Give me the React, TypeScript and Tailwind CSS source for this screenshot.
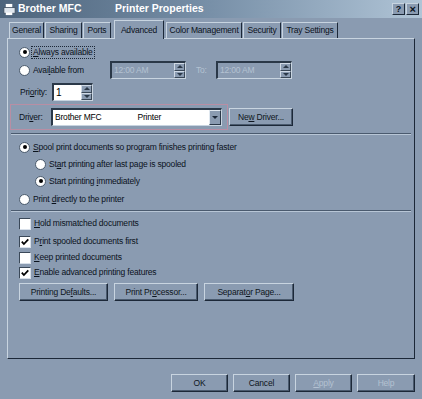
import React from "react";

const font = { fontFamily: "'Liberation Sans', Arial, sans-serif" };

function Radio({ checked }: { checked?: boolean }) {
  return (
    <span className="relative inline-block w-[11px] h-[11px] rounded-full bg-white border border-[#4a5a6c] shrink-0">
      {checked && <span className="absolute left-[2.5px] top-[2.5px] w-[4px] h-[4px] rounded-full bg-black" />}
    </span>
  );
}

function Check({ checked }: { checked?: boolean }) {
  return (
    <span className="relative inline-block w-[12px] h-[12px] bg-white border-t border-l border-[#3a4858] border-b border-r border-b-[#d8e0ea] border-r-[#d8e0ea] shrink-0">
      {checked && (
        <svg viewBox="0 0 10 10" className="absolute left-0 top-0 w-[10px] h-[10px]">
          <path d="M1.8 4.6 L3.9 7 L8.3 2.4" stroke="#000" strokeWidth="1.8" fill="none" />
        </svg>
      )}
    </span>
  );
}

function Btn({ children, w, disabled }: { children: React.ReactNode; w: number; disabled?: boolean }) {
  return (
    <div
      className="h-[18px] shrink-0 flex items-center justify-center whitespace-nowrap border border-t-[#c8d4e0] border-l-[#c8d4e0] border-b-[#1c2838] border-r-[#1c2838] shadow-[inset_-1px_-1px_0_#4a5a6e]"
      style={{ width: w }}
    >
      <span className={disabled ? "text-[#b4c2d2]" : "text-[#0e1620]"}>{children}</span>
    </div>
  );
}

function Spin() {
  return (
    <div className="flex flex-col w-[11px] h-full">
      <div className="flex-1 flex items-center justify-center border border-t-[#d0dae6] border-l-[#d0dae6] border-b-[#3a4858] border-r-[#3a4858] bg-[#8a9bb1]">
        <span className="w-0 h-0 border-l-[3px] border-r-[3px] border-b-[3px] border-l-transparent border-r-transparent border-b-[#2a3848]" />
      </div>
      <div className="flex-1 flex items-center justify-center border border-t-[#d0dae6] border-l-[#d0dae6] border-b-[#3a4858] border-r-[#3a4858] bg-[#8a9bb1]">
        <span className="w-0 h-0 border-l-[3px] border-r-[3px] border-t-[3px] border-l-transparent border-r-transparent border-t-[#2a3848]" />
      </div>
    </div>
  );
}

function Field({ w, children, disabled }: { w: number; children: React.ReactNode; disabled?: boolean }) {
  return (
    <div
      className={`h-[18px] shrink-0 flex items-stretch border-t-2 border-l-2 border-t-[#2a3848] border-l-[#2a3848] border-b border-r border-b-[#c8d4e0] border-r-[#c8d4e0] ${disabled ? "bg-[#8a9bb1]" : "bg-white"}`}
      style={{ width: w }}
    >
      <div className={`flex-1 flex items-center pl-[2px] whitespace-nowrap ${disabled ? "text-[#b4c2d2]" : "text-black text-[10px]"}`}>{children}</div>
      <Spin />
    </div>
  );
}

function Sep() {
  return (
    <div className="mx-[3px]">
      <div className="h-[1px] bg-[#4a5a6e]" />
      <div className="h-[1px] bg-[#b8c6d6]" />
    </div>
  );
}

const tabs = [
  { t: "General", w: 35 },
  { t: "Sharing", w: 37 },
  { t: "Ports", w: 28 },
  { t: "Advanced", w: 50 },
  { t: "Color Management", w: 76 },
  { t: "Security", w: 38 },
  { t: "Tray Settings", w: 56 },
];

export default function App() {
  return (
    <div
      className="w-[422px] h-[399px] bg-[#8a9bb1] text-[8.5px] tracking-[-0.2px] text-[#0a121c] flex flex-col overflow-hidden whitespace-nowrap"
      style={font}
    >
      {/* Title bar */}
      <div className="h-[18px] flex items-center bg-gradient-to-r from-[#4d647c] via-[#7890a8] to-[#b0c4d6] pl-[3px] pr-[3px]">
        <svg viewBox="0 0 14 14" className="w-[13px] h-[13px]">
          <rect x="3" y="1" width="7" height="4" fill="#fff" />
          <rect x="1" y="5" width="12" height="6" fill="#dfe6ee" stroke="#3a4858" strokeWidth="0.8" />
          <rect x="3" y="10" width="7" height="3" fill="#fff" />
        </svg>
        <span className="ml-[2px] w-[97px] font-bold text-white text-[10.5px] tracking-normal">Brother MFC</span>
        <span className="font-bold text-white text-[10.5px] tracking-normal">Printer Properties</span>
        <div className="ml-auto flex gap-[1px]">
          <div className="w-[13px] h-[12px] bg-[#8a9bb1] border border-t-[#c8d4e0] border-l-[#c8d4e0] border-b-[#1c2838] border-r-[#1c2838] flex items-center justify-center font-bold text-[9px] leading-none">?</div>
          <div className="w-[13px] h-[12px] bg-[#8a9bb1] border border-t-[#c8d4e0] border-l-[#c8d4e0] border-b-[#1c2838] border-r-[#1c2838] flex items-center justify-center font-bold text-[11px] leading-none">×</div>
        </div>
      </div>

      {/* Tabs */}
      <div className="h-[19px] mt-[1px] pl-[9px] flex items-end">
        {tabs.map(({ t, w }) => {
          const active = t === "Advanced";
          return (
            <div
              key={t}
              style={{ width: w }}
              className={`flex items-center justify-center shrink-0 border-t border-l border-r border-t-[#c8d4e0] border-l-[#c8d4e0] border-r-[#1c2838] ${
                active ? "h-[19px] mx-[2px] -mb-[1px] bg-[#8a9bb1] relative z-10" : "h-[16px] mr-[1px]"
              }`}
            >
              {t}
            </div>
          );
        })}
      </div>

      {/* Panel */}
      <div className="mx-[7px] h-[321px] border border-t-[#c8d4e0] border-l-[#c8d4e0] border-b-[#1c2838] border-r-[#1c2838] flex flex-col">
        <div className="h-[16px] mt-[5px] pl-[11px] flex items-center">
          <Radio checked />
          <span className="ml-[1px] px-[1px] border border-dotted border-[#1c2838] leading-[11px]">
            <span className="underline">A</span>lways available
          </span>
        </div>
        <div className="h-[18px] mt-[1px] pl-[11px] flex items-center">
          <Radio />
          <span className="ml-[3px] w-[77px]">
            Avai<span className="underline">l</span>able from
          </span>
          <Field w={76} disabled>12:00 AM</Field>
          <span className="ml-[10px] w-[20px] text-[#b4c2d2]">To:</span>
          <Field w={76} disabled>12:00 AM</Field>
        </div>
        <div className="h-[18px] mt-[4px] pl-[12px] flex items-center">
          <span className="w-[32px]">
            Pri<span className="underline">o</span>rity:
          </span>
          <Field w={41}>1</Field>
        </div>
        <div className="mt-[3px] ml-[2px] flex items-center">
          <div className="h-[26px] w-[218px] border border-[#b88ea4] flex items-center pl-[8px]">
            <span className="w-[32px]">
              Dri<span className="underline">v</span>er:
            </span>
            <div className="h-[18px] w-[171px] bg-white flex items-stretch border-t-2 border-l-2 border-t-[#2a3848] border-l-[#2a3848] border-b border-r border-b-[#c8d4e0] border-r-[#c8d4e0]">
              <div className="flex-1 flex items-center pl-[2px] text-black">
                Brother MFC<span className="ml-[36px]">Printer</span>
              </div>
              <div className="w-[12px] bg-[#8a9bb1] border border-t-[#e0e8f0] border-l-[#e0e8f0] border-b-[#2a3848] border-r-[#2a3848] flex items-center justify-center">
                <span className="w-0 h-0 border-l-[3px] border-r-[3px] border-t-[3px] border-l-transparent border-r-transparent border-t-[#1c2838]" />
              </div>
            </div>
          </div>
          <div className="ml-[1px]">
            <Btn w={64}>
              Ne<span className="underline">w</span> Driver...
            </Btn>
          </div>
        </div>

        <div className="mt-[3px]">
          <Sep />
        </div>

        <div className="h-[16px] mt-[4px] pl-[11px] flex items-center">
          <Radio checked />
          <span className="ml-[3px]">
            <span className="underline">S</span>pool print documents so program finishes printing faster
          </span>
        </div>
        <div className="h-[16px] mt-[1px] pl-[27px] flex items-center">
          <Radio />
          <span className="ml-[3px]">
            St<span className="underline">a</span>rt printing after last page is spooled
          </span>
        </div>
        <div className="h-[16px] mt-[1px] pl-[27px] flex items-center">
          <Radio checked />
          <span className="ml-[3px]">
            Start printing <span className="underline">i</span>mmediately
          </span>
        </div>
        <div className="h-[16px] mt-[2px] pl-[11px] flex items-center">
          <Radio />
          <span className="ml-[3px]">
            Print <span className="underline">d</span>irectly to the printer
          </span>
        </div>

        <div className="mt-[3px]">
          <Sep />
        </div>

        <div className="h-[15px] mt-[4px] pl-[11px] flex items-center">
          <Check />
          <span className="ml-[3px]">
            <span className="underline">H</span>old mismatched documents
          </span>
        </div>
        <div className="h-[15px] mt-[3px] pl-[11px] flex items-center">
          <Check checked />
          <span className="ml-[3px]">
            P<span className="underline">r</span>int spooled documents first
          </span>
        </div>
        <div className="h-[15px] mt-[1px] pl-[11px] flex items-center">
          <Check />
          <span className="ml-[3px]">
            <span className="underline">K</span>eep printed documents
          </span>
        </div>
        <div className="h-[15px] mt-[0px] pl-[11px] flex items-center">
          <Check checked />
          <span className="ml-[3px]">
            <span className="underline">E</span>nable advanced printing features
          </span>
        </div>

        <div className="mt-[3px] pl-[11px] flex gap-[6px]">
          <Btn w={89}>
            Printing De<span className="underline">f</span>aults...
          </Btn>
          <Btn w={84}>
            Print Pr<span className="underline">o</span>cessor...
          </Btn>
          <Btn w={90}>
            Separat<span className="underline">o</span>r Page...
          </Btn>
        </div>
      </div>

      {/* Bottom buttons */}
      <div className="mt-[15px] pr-[7px] flex justify-end gap-[5px]">
        <Btn w={57}>OK</Btn>
        <Btn w={57}>Cancel</Btn>
        <Btn w={57} disabled>
          <span className="underline">A</span>pply
        </Btn>
        <Btn w={58} disabled>
          Help
        </Btn>
      </div>
    </div>
  );
}
